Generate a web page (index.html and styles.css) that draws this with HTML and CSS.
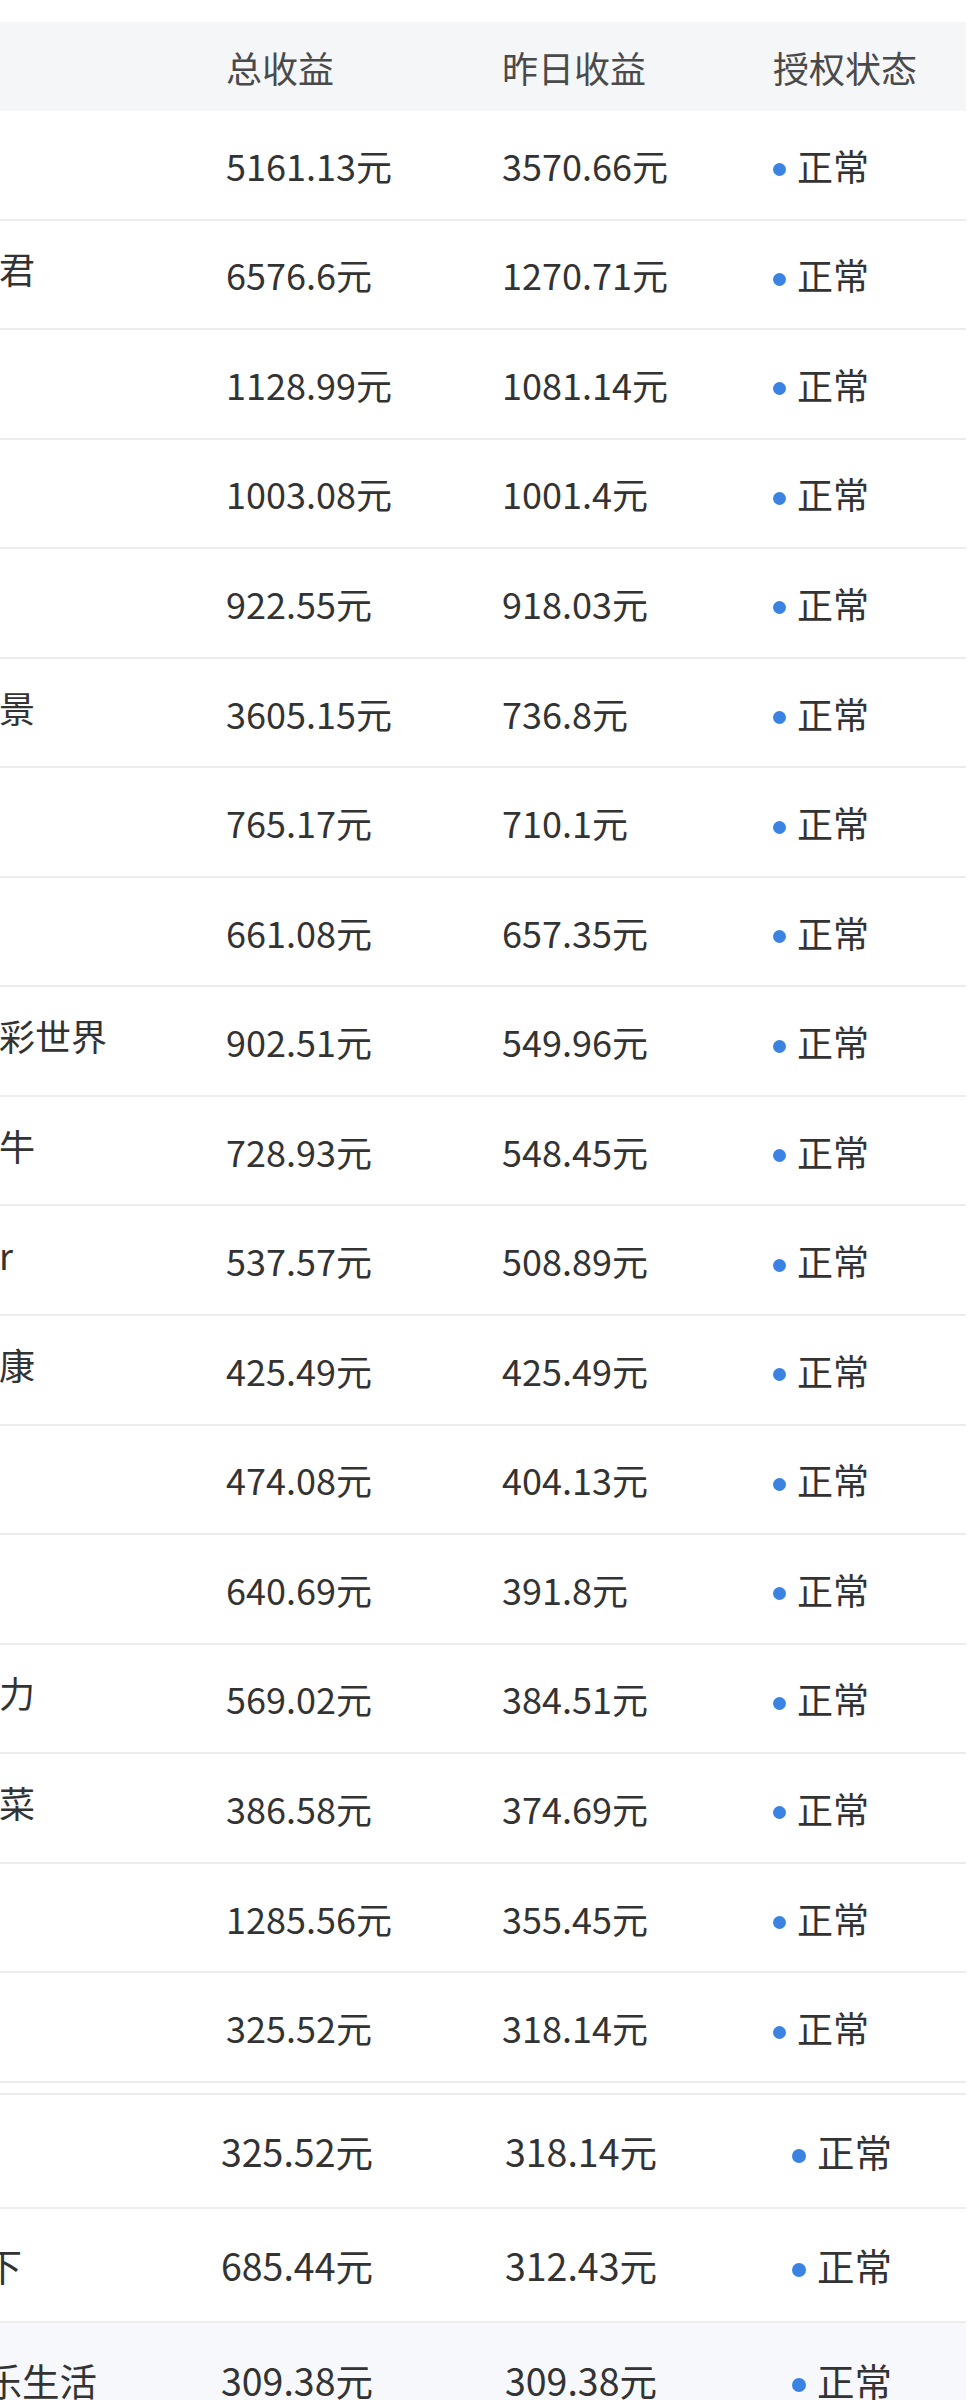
FILE: index.html
```html
<!DOCTYPE html>
<html lang="zh-CN">
<head>
<meta charset="utf-8">
<title>收益列表</title>
<link rel="stylesheet" href="styles.css">
</head>
<body>
<div class="viewport">
  <div class="table t1">
    <div class="row head">
      <div class="cell name"></div>
      <div class="cell">总收益</div>
      <div class="cell">昨日收益</div>
      <div class="cell">授权状态</div>
    </div>
    <div class="row"><div class="cell name"></div><div class="cell">5161.13元</div><div class="cell">3570.66元</div><div class="cell status"><span class="dot"></span>正常</div></div>
    <div class="row"><div class="cell name">王子君</div><div class="cell">6576.6元</div><div class="cell">1270.71元</div><div class="cell status"><span class="dot"></span>正常</div></div>
    <div class="row"><div class="cell name"></div><div class="cell">1128.99元</div><div class="cell">1081.14元</div><div class="cell status"><span class="dot"></span>正常</div></div>
    <div class="row"><div class="cell name"></div><div class="cell">1003.08元</div><div class="cell">1001.4元</div><div class="cell status"><span class="dot"></span>正常</div></div>
    <div class="row"><div class="cell name"></div><div class="cell">922.55元</div><div class="cell">918.03元</div><div class="cell status"><span class="dot"></span>正常</div></div>
    <div class="row"><div class="cell name">好风景</div><div class="cell">3605.15元</div><div class="cell">736.8元</div><div class="cell status"><span class="dot"></span>正常</div></div>
    <div class="row"><div class="cell name"></div><div class="cell">765.17元</div><div class="cell">710.1元</div><div class="cell status"><span class="dot"></span>正常</div></div>
    <div class="row"><div class="cell name"></div><div class="cell">661.08元</div><div class="cell">657.35元</div><div class="cell status"><span class="dot"></span>正常</div></div>
    <div class="row"><div class="cell name">七色彩世界</div><div class="cell">902.51元</div><div class="cell">549.96元</div><div class="cell status"><span class="dot"></span>正常</div></div>
    <div class="row"><div class="cell name">老黄牛</div><div class="cell">728.93元</div><div class="cell">548.45元</div><div class="cell status"><span class="dot"></span>正常</div></div>
    <div class="row"><div class="cell name">星空r</div><div class="cell">537.57元</div><div class="cell">508.89元</div><div class="cell status"><span class="dot"></span>正常</div></div>
    <div class="row"><div class="cell name">小安康</div><div class="cell">425.49元</div><div class="cell">425.49元</div><div class="cell status"><span class="dot"></span>正常</div></div>
    <div class="row"><div class="cell name"></div><div class="cell">474.08元</div><div class="cell">404.13元</div><div class="cell status"><span class="dot"></span>正常</div></div>
    <div class="row"><div class="cell name"></div><div class="cell">640.69元</div><div class="cell">391.8元</div><div class="cell status"><span class="dot"></span>正常</div></div>
    <div class="row"><div class="cell name">有活力</div><div class="cell">569.02元</div><div class="cell">384.51元</div><div class="cell status"><span class="dot"></span>正常</div></div>
    <div class="row"><div class="cell name">小白菜</div><div class="cell">386.58元</div><div class="cell">374.69元</div><div class="cell status"><span class="dot"></span>正常</div></div>
    <div class="row"><div class="cell name"></div><div class="cell">1285.56元</div><div class="cell">355.45元</div><div class="cell status"><span class="dot"></span>正常</div></div>
    <div class="row"><div class="cell name"></div><div class="cell">325.52元</div><div class="cell">318.14元</div><div class="cell status"><span class="dot"></span>正常</div></div>
  </div>

  <div class="table t2">
    <div class="row"><div class="cell name"></div><div class="cell">325.52元</div><div class="cell">318.14元</div><div class="cell status"><span class="dot"></span>正常</div></div>
    <div class="row"><div class="cell name">天下</div><div class="cell">685.44元</div><div class="cell">312.43元</div><div class="cell status"><span class="dot"></span>正常</div></div>
    <div class="row hover"><div class="cell name">快乐生活</div><div class="cell">309.38元</div><div class="cell">309.38元</div><div class="cell status"><span class="dot"></span>正常</div></div>
  </div>
</div>
</body>
</html>
```

FILE: styles.css
```css
html, body {
  margin: 0;
  padding: 0;
  background: #ffffff;
}

body {
  font-family: "Noto Sans CJK SC", "Noto Sans", sans-serif;
  color: #333333;
}

.viewport {
  width: 976px;
  overflow: hidden;
}

.table {
  display: flex;
  flex-direction: column;
}

.row {
  display: grid;
  align-items: center;
  box-sizing: border-box;
}

.cell {
  white-space: nowrap;
  line-height: 1;
}

.status {
  display: flex;
  align-items: center;
}

.dot {
  width: 13px;
  height: 13px;
  border-radius: 50%;
  background: #3b83e2;
  margin-top: 10px;
  margin-right: 11px;
  flex: none;
}

/* ---- first section ---- */
.t1 {
  margin: 22px 0 0 -73px;
  width: 1039px;
  font-size: 36px;
}

.t1 .row {
  grid-template-columns: 299px 276px 271px 193px;
  height: 109.55px;
  border-bottom: 2px solid #ececec;
}

.t1 .row.head {
  height: 89px;
  background: #f5f6f8;
  border-bottom: none;
  color: #4a4a4a;
}

.t1 .name {
  padding-bottom: 12px;
}

/* ---- second section ---- */
.t2 {
  margin: 10px 0 0 -53px;
  width: 1019px;
  font-size: 37.5px;
  border-top: 2px solid #ececec;
}

.t2 .row {
  grid-template-columns: 274px 284px 287px 174px;
  height: 114px;
  border-bottom: 2px solid #ececec;
}

.t2 .row.hover {
  background: #f6f8fb;
  border-bottom: none;
}

.t2 .dot {
  width: 14px;
  height: 14px;
  margin-right: 11px;
}
```
